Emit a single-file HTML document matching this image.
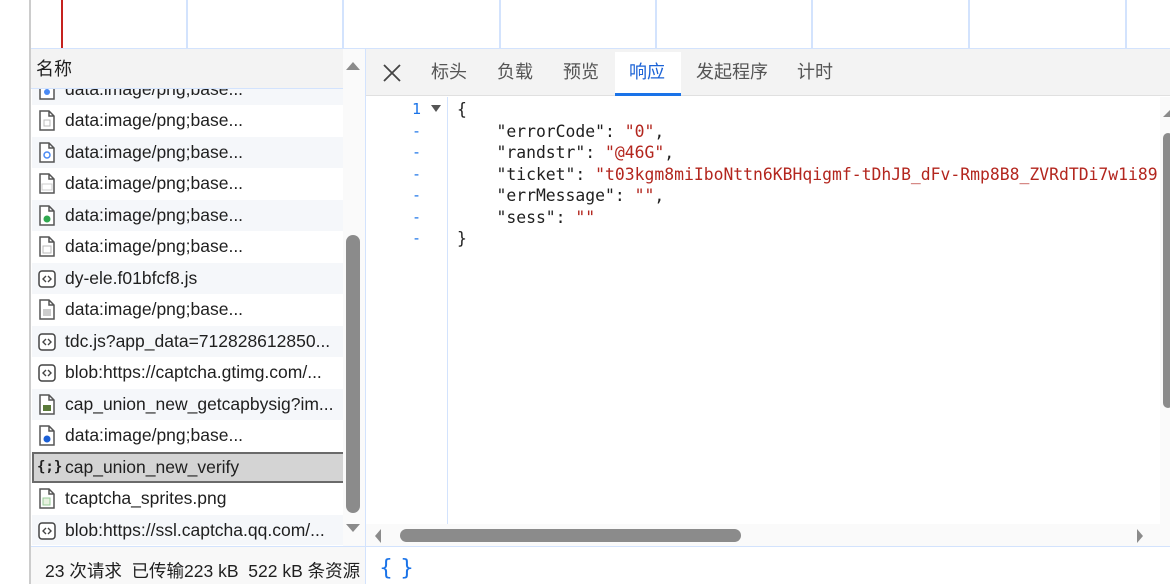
<!DOCTYPE html>
<html><head><meta charset="utf-8"><style>
*{margin:0;padding:0;box-sizing:border-box}
html,body{width:1170px;height:584px;overflow:hidden}
body{background:#fff;font-family:"Liberation Sans","Noto Sans CJK SC",sans-serif;position:relative;color:#1f1f1f}
.abs{position:absolute}
.vl{position:absolute;top:0;height:48px;width:2px;background:#d3e3fd}
.row{position:absolute;left:32px;width:311px;height:31.5px;font-size:17.5px;line-height:31.5px;padding-left:33px;white-space:nowrap}
.row.s{background:#f5f7fa}
.row svg{position:absolute;left:6px;top:5px}
.code{position:absolute;left:457px;font-family:"DejaVu Sans Mono","Liberation Mono",monospace;font-size:16.4px;line-height:21.5px;white-space:pre;color:#1f1f1f}
.str{color:#b3261e}
.ln{position:absolute;left:366px;width:55px;text-align:right;font-family:"DejaVu Sans Mono",monospace;font-size:15px;line-height:21.5px;color:#1a73e8}
.tab{position:absolute;top:49px;height:47px;line-height:47px;font-size:18px;color:#555}
</style></head><body>
<div class="abs" style="left:29px;top:0;width:2px;height:584px;background:#ccc"></div>
<div class="abs" style="left:61px;top:0;width:2px;height:48px;background:#c5221f"></div>
<div class="vl" style="left:186px"></div><div class="vl" style="left:342px"></div><div class="vl" style="left:499px"></div><div class="vl" style="left:655px"></div><div class="vl" style="left:811px"></div><div class="vl" style="left:968px"></div><div class="vl" style="left:1125px"></div>
<div class="abs" style="left:31px;top:48px;width:1139px;height:1px;background:#d3e3fd"></div>
<div class="abs" style="left:31px;top:49px;width:334px;height:39px;background:#f3f3f3"></div>
<div class="abs" style="left:36px;top:57px;font-size:18px;line-height:24px">名称</div>
<div class="abs" style="left:31px;top:88px;width:312px;height:1px;background:#d3e3fd"></div>
<div class="abs" style="left:365px;top:49px;width:1px;height:535px;background:#d3e3fd"></div>
<div class="abs" style="left:0;top:89px;width:343px;height:456px;overflow:hidden">
<div style="position:absolute;left:0;top:-89px;width:343px;height:700px">
<div class="row s" style="top:73.5px"><svg width="18" height="21"><path d="M2 1h9l5 5v14H2z M11 1v5h5" fill="#fff" stroke="#555" stroke-width="1.5"/><circle cx="9" cy="13" r="3" fill="#4a8af4"/></svg>data:image/png;base...</div>
<div class="row" style="top:105px"><svg width="18" height="21"><path d="M2 1h9l5 5v14H2z M11 1v5h5" fill="#fff" stroke="#555" stroke-width="1.5"/><rect x="6" y="10" width="6" height="6" fill="none" stroke="#bbb"/></svg>data:image/png;base...</div>
<div class="row s" style="top:136.5px"><svg width="18" height="21"><path d="M2 1h9l5 5v14H2z M11 1v5h5" fill="#fff" stroke="#555" stroke-width="1.5"/><circle cx="9" cy="13" r="3" fill="none" stroke="#4a8af4" stroke-width="1.5"/></svg>data:image/png;base...</div>
<div class="row" style="top:168px"><svg width="18" height="21"><path d="M2 1h9l5 5v14H2z M11 1v5h5" fill="#fff" stroke="#555" stroke-width="1.5"/><rect x="4" y="11" width="10" height="6" fill="none" stroke="#ccc"/></svg>data:image/png;base...</div>
<div class="row s" style="top:199.5px"><svg width="18" height="21"><path d="M2 1h9l5 5v14H2z M11 1v5h5" fill="#fff" stroke="#555" stroke-width="1.5"/><circle cx="9" cy="14" r="3.5" fill="#2fa84f"/></svg>data:image/png;base...</div>
<div class="row" style="top:231px"><svg width="18" height="21"><path d="M2 1h9l5 5v14H2z M11 1v5h5" fill="#fff" stroke="#555" stroke-width="1.5"/><rect x="5" y="10" width="8" height="7" fill="none" stroke="#bbb"/></svg>data:image/png;base...</div>
<div class="row s" style="top:262.5px"><svg width="18" height="21"><rect x="1" y="3" width="16" height="16" rx="3" fill="#fff" stroke="#444" stroke-width="1.5"/><path d="M8 8l-3 3 3 3M10 8l3 3-3 3" fill="none" stroke="#444" stroke-width="1.4"/></svg>dy-ele.f01bfcf8.js</div>
<div class="row" style="top:294px"><svg width="18" height="21"><path d="M2 1h9l5 5v14H2z M11 1v5h5" fill="#fff" stroke="#555" stroke-width="1.5"/><rect x="5" y="10" width="8" height="7" fill="#ccc"/></svg>data:image/png;base...</div>
<div class="row s" style="top:325.5px"><svg width="18" height="21"><rect x="1" y="3" width="16" height="16" rx="3" fill="#fff" stroke="#444" stroke-width="1.5"/><path d="M8 8l-3 3 3 3M10 8l3 3-3 3" fill="none" stroke="#444" stroke-width="1.4"/></svg>tdc.js?app_data=712828612850...</div>
<div class="row" style="top:357px"><svg width="18" height="21"><rect x="1" y="3" width="16" height="16" rx="3" fill="#fff" stroke="#444" stroke-width="1.5"/><path d="M8 8l-3 3 3 3M10 8l3 3-3 3" fill="none" stroke="#444" stroke-width="1.4"/></svg>blob:https://captcha.gtimg.com/...</div>
<div class="row s" style="top:388.5px"><svg width="18" height="21"><path d="M2 1h9l5 5v14H2z M11 1v5h5" fill="#fff" stroke="#555" stroke-width="1.5"/><rect x="5" y="11" width="8" height="6" fill="#5a7a3a"/></svg>cap_union_new_getcapbysig?im...</div>
<div class="row" style="top:420px"><svg width="18" height="21"><path d="M2 1h9l5 5v14H2z M11 1v5h5" fill="#fff" stroke="#555" stroke-width="1.5"/><circle cx="9" cy="14" r="3.5" fill="#1a5fd6"/></svg>data:image/png;base...</div>
<div class="row" style="top:451.5px;background:#d4d4d4;border:2px solid #6a6a6a;border-right:none;padding-left:31px;line-height:27.5px"><span style="position:absolute;left:3px;top:0;font-family:'DejaVu Sans Mono',monospace;font-size:14px;font-weight:bold">{;}</span>cap_union_new_verify</div>
<div class="row" style="top:483px"><svg width="18" height="21"><path d="M2 1h9l5 5v14H2z M11 1v5h5" fill="#fff" stroke="#555" stroke-width="1.5"/><rect x="5" y="10" width="7" height="7" fill="#e8f2e0" stroke="#9c9"/></svg>tcaptcha_sprites.png</div>
<div class="row s" style="top:514.5px"><svg width="18" height="21"><rect x="1" y="3" width="16" height="16" rx="3" fill="#fff" stroke="#444" stroke-width="1.5"/><path d="M8 8l-3 3 3 3M10 8l3 3-3 3" fill="none" stroke="#444" stroke-width="1.4"/></svg>blob:https://ssl.captcha.qq.com/...</div>
</div></div>
<div class="abs" style="left:343px;top:49px;width:22px;height:497px;background:#fafafa"></div>
<svg class="abs" style="left:345px;top:60px" width="16" height="12"><path d="M1 10L8 2l7 8z" fill="#8b8b8b"/></svg>
<svg class="abs" style="left:345px;top:522px" width="16" height="12"><path d="M1 2L8 10l7-8z" fill="#8b8b8b"/></svg>
<div class="abs" style="left:346px;top:235px;width:14px;height:278px;border-radius:7px;background:#8b8b8b"></div>
<div class="abs" style="left:31px;top:546px;width:1139px;height:1px;background:#d3e3fd"></div>
<div class="abs" style="left:31px;top:547px;width:334px;height:37px;background:#f8f8f8"></div>
<div class="abs" style="left:45px;top:560px;font-size:17.5px;line-height:22px;white-space:nowrap">23 次请求&nbsp; 已传输223 kB&nbsp; 522 kB 条资源</div>
<div class="abs" style="left:379px;top:556px;font-size:22px;line-height:26px;color:#1a73e8;font-family:'DejaVu Sans',sans-serif">{ }</div>
<div class="abs" style="left:366px;top:49px;width:804px;height:47px;background:#f3f3f3;border-bottom:1px solid #e0e0e0"></div>
<svg class="abs" style="left:382px;top:63px" width="20" height="20"><path d="M2 2L18 18M18 2L2 18" stroke="#444" stroke-width="1.8"/></svg>
<div class="tab" style="left:431px">标头</div>
<div class="tab" style="left:497px">负载</div>
<div class="tab" style="left:563px">预览</div>
<div class="abs" style="left:615px;top:52px;width:66px;height:44px;background:#fff;border-bottom:3px solid #1a73e8"></div>
<div class="tab" style="left:629px;color:#1a62d6">响应</div>
<div class="tab" style="left:696px">发起程序</div>
<div class="tab" style="left:797px">计时</div>
<div class="abs" style="left:447px;top:97px;width:1px;height:427px;background:#d3e3fd"></div>
<div class="ln" style="top:99px">1<br>-<br>-<br>-<br>-<br>-<br>-</div>
<svg class="abs" style="left:430px;top:104px" width="12" height="10"><path d="M1 1h10L6 8z" fill="#555"/></svg>
<div class="code" style="top:99px">{
    "errorCode": <span class="str">"0"</span>,
    "randstr": <span class="str">"@46G"</span>,
    "ticket": <span class="str">"t03kgm8miIboNttn6KBHqigmf-tDhJB_dFv-Rmp8B8_ZVRdTDi7w1i89</span>
    "errMessage": <span class="str">""</span>,
    "sess": <span class="str">""</span>
}</div>
<div class="abs" style="left:1160px;top:97px;width:10px;height:427px;background:#fafafa"></div>
<svg class="abs" style="left:1160px;top:108px" width="10" height="10"><path d="M10 2L3 9h7z" fill="#8b8b8b"/></svg>
<div class="abs" style="left:1163px;top:133px;width:10px;height:275px;border-radius:6px;background:#8b8b8b"></div>
<div class="abs" style="left:366px;top:524px;width:804px;height:22px;background:#fafafa"></div>
<svg class="abs" style="left:373px;top:528px" width="10" height="16"><path d="M8 1L2 8l6 7z" fill="#8b8b8b"/></svg>
<svg class="abs" style="left:1135px;top:528px" width="10" height="16"><path d="M2 1l6 7-6 7z" fill="#8b8b8b"/></svg>
<div class="abs" style="left:400px;top:529px;width:341px;height:13px;border-radius:7px;background:#8b8b8b"></div>
</body></html>
